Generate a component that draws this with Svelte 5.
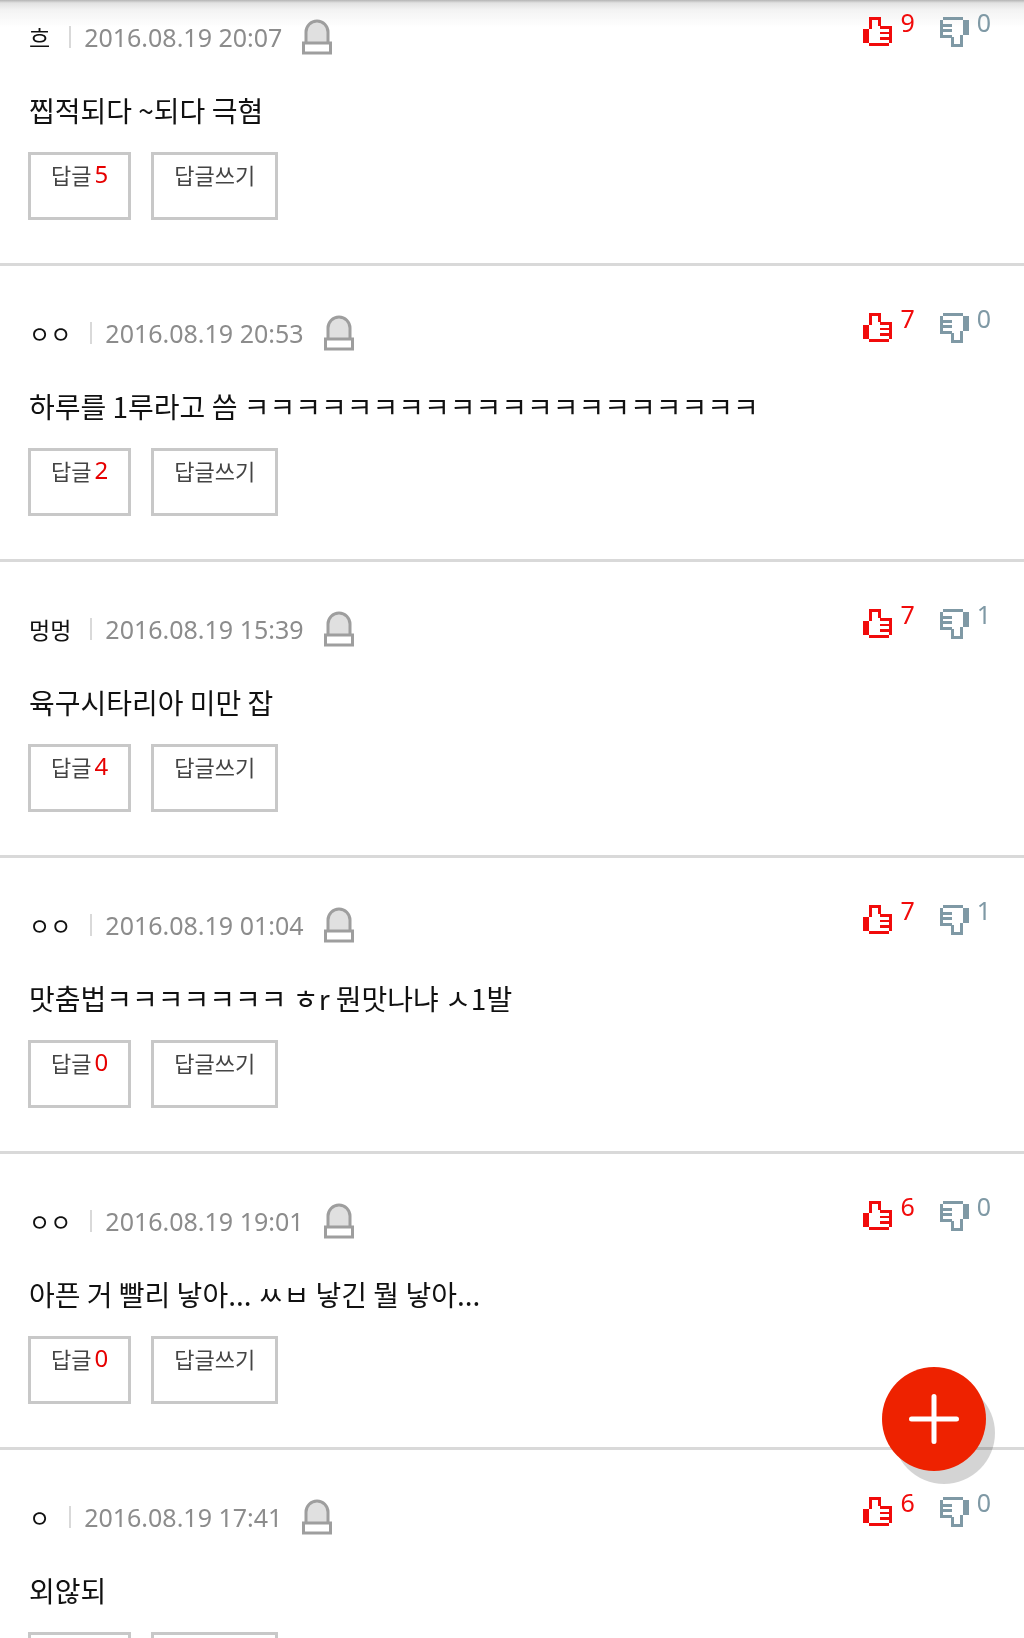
<script lang="ts">
  type Comment = {
    author: string;
    date: string;
    text: string;
    replies: number;
    up: number;
    down: number;
  };

  const comments: Comment[] = [
    { author: '흐', date: '2016.08.19 20:07', text: '찝적되다 ~되다 극혐', replies: 5, up: 9, down: 0 },
    { author: 'ㅇㅇ', date: '2016.08.19 20:53', text: '하루를 1루라고 씀 ㅋㅋㅋㅋㅋㅋㅋㅋㅋㅋㅋㅋㅋㅋㅋㅋㅋㅋㅋㅋ', replies: 2, up: 7, down: 0 },
    { author: '멍멍', date: '2016.08.19 15:39', text: '육구시타리아 미만 잡', replies: 4, up: 7, down: 1 },
    { author: 'ㅇㅇ', date: '2016.08.19 01:04', text: '맛춤법ㅋㅋㅋㅋㅋㅋㅋ ㅎr 뭔맛나냐 ㅅ1발', replies: 0, up: 7, down: 1 },
    { author: 'ㅇㅇ', date: '2016.08.19 19:01', text: '아픈 거 빨리 낳아... ㅆㅂ 낳긴 뭘 낳아...', replies: 0, up: 6, down: 0 },
    { author: 'ㅇ', date: '2016.08.19 17:41', text: '외않되', replies: 0, up: 6, down: 0 }
  ];
</script>

<div class="page">
  <div class="header-shadow"></div>

  <ul class="comments">
    {#each comments as comment}
      <li class="comment">
        <div class="top">
          <div class="info">
            <span class="author">{comment.author}</span>
            <span class="bar"></span>
            <span class="date">{comment.date}</span>
            <button class="report" aria-label="신고">
              <svg width="30" height="36" viewBox="0 0 30 36">
                <path d="M4 24V13a11 11 0 0 1 22 0v11" fill="#e0e0e0" stroke="#9e9e9e" stroke-width="3" />
                <rect x="1.5" y="24" width="27" height="10" fill="#fff" stroke="#9e9e9e" stroke-width="3" />
              </svg>
            </button>
          </div>
          <div class="votes">
            <button class="vote up" aria-label="공감 {comment.up}">
              <svg width="30" height="30" viewBox="0 0 30 30" fill="currentColor">
                <path d="M0 12h6v14H0zM6 9h3v3H6zM6 0h12v3H6zM6 3h3v6H6zM15 3h3v6h-3zM17 9h12v3H17zM26 12h3v14h-3zM17 15h9v2h-9zM17 20h9v3h-9zM6 26h20v3H6z" />
              </svg>
              <span>{comment.up}</span>
            </button>
            <button class="vote down" aria-label="비공감 {comment.down}">
              <svg width="30" height="30" viewBox="0 0 30 30" fill="currentColor">
                <path d="M23 3h6v15h-6zM20 18h3v3h-3zM11 27h12v3H11zM20 21h3v6h-3zM11 20h3v7h-3zM0 18h12v3H0zM0 3h3v15H0zM3 12h9v3H3zM3 7h9v3H3zM3 0h20v3H3z" />
              </svg>
              <span>{comment.down}</span>
            </button>
          </div>
        </div>
        <p class="text">{comment.text}</p>
        <div class="actions">
          <button class="reply">답글 <em>{comment.replies}</em></button>
          <button class="reply">답글쓰기</button>
        </div>
      </li>
    {/each}
  </ul>

  <button class="write" aria-label="댓글 쓰기">
    <svg width="50" height="50" viewBox="0 0 50 50">
      <path d="M25 2.5v45M2.5 25h45" stroke="#fff" stroke-width="5" stroke-linecap="round" />
    </svg>
  </button>
</div>

<style>
  :global(body) {
    margin: 0;
    background: #fff;
  }

  .page {
    height: 100vh;
    overflow: hidden;
    font-family: 'Noto Sans CJK KR', sans-serif;
  }

  .header-shadow {
    position: fixed;
    top: 0;
    left: 0;
    right: 0;
    height: 28px;
    background: linear-gradient(#b4b4b4, #e2e2e2 3px, #f3f3f3 10px, rgba(255, 255, 255, 0));
    z-index: -1;
  }

  button {
    margin: 0;
    padding: 0;
    border: 0;
    background: none;
    font-family: inherit;
    cursor: pointer;
  }

  svg {
    display: block;
  }

  .comments {
    margin: 0;
    padding: 0;
    list-style: none;
  }

  .comment {
    padding: 43px 29px;
    border-bottom: 3px solid #d9d9d9;
  }

  /* the list is scrolled a little way under the header */
  .comment:first-child {
    padding-top: 13px;
  }

  .top {
    display: flex;
    justify-content: space-between;
    align-items: flex-start;
    height: 73px;
  }

  .info {
    display: flex;
    align-items: center;
    height: 48px;
  }

  .author {
    font-size: 23px;
    line-height: 32px;
    color: #111;
  }

  .bar {
    width: 2px;
    height: 22px;
    margin: 0 13px 0 19px;
    background: #d9d9d9;
  }

  .date {
    font-family: 'Noto Sans', sans-serif;
    font-size: 25px;
    line-height: 32px;
    color: #8c8c8c;
  }

  .report {
    margin-left: 20px;
  }

  .votes {
    display: flex;
    gap: 25px;
    padding-right: 4px;
  }

  .vote {
    display: flex;
    gap: 7px;
    font-family: 'Noto Sans', sans-serif;
    font-size: 25px;
    line-height: 18px;
  }

  .vote svg {
    margin-top: 4px;
  }

  .up {
    color: #f10b0b;
  }

  .down {
    color: #7f99a5;
  }

  .text {
    margin: 0;
    font-size: 28px;
    line-height: 48px;
    color: #111;
  }

  .actions {
    display: flex;
    gap: 20px;
    margin-top: 18px;
    /* boxes line up with the edge of the glyphs above */
    margin-left: -1px;
  }

  .reply {
    display: flex;
    align-items: flex-start;
    gap: 3px;
    height: 68px;
    padding: 3px 20px;
    border: 3px solid #c8c8c8;
    font-size: 22px;
    line-height: 32px;
    color: #444;
  }

  .reply em {
    font-family: 'Noto Sans', sans-serif;
    font-size: 24px;
    font-style: normal;
    color: #e60000;
  }

  .write {
    position: fixed;
    right: 38px;
    bottom: 167px;
    display: grid;
    place-items: center;
    width: 104px;
    height: 104px;
    border-radius: 50%;
    background: #ee2200;
    box-shadow: 10px 14px 0 -1px rgba(0, 0, 0, 0.17);
  }
</style>
